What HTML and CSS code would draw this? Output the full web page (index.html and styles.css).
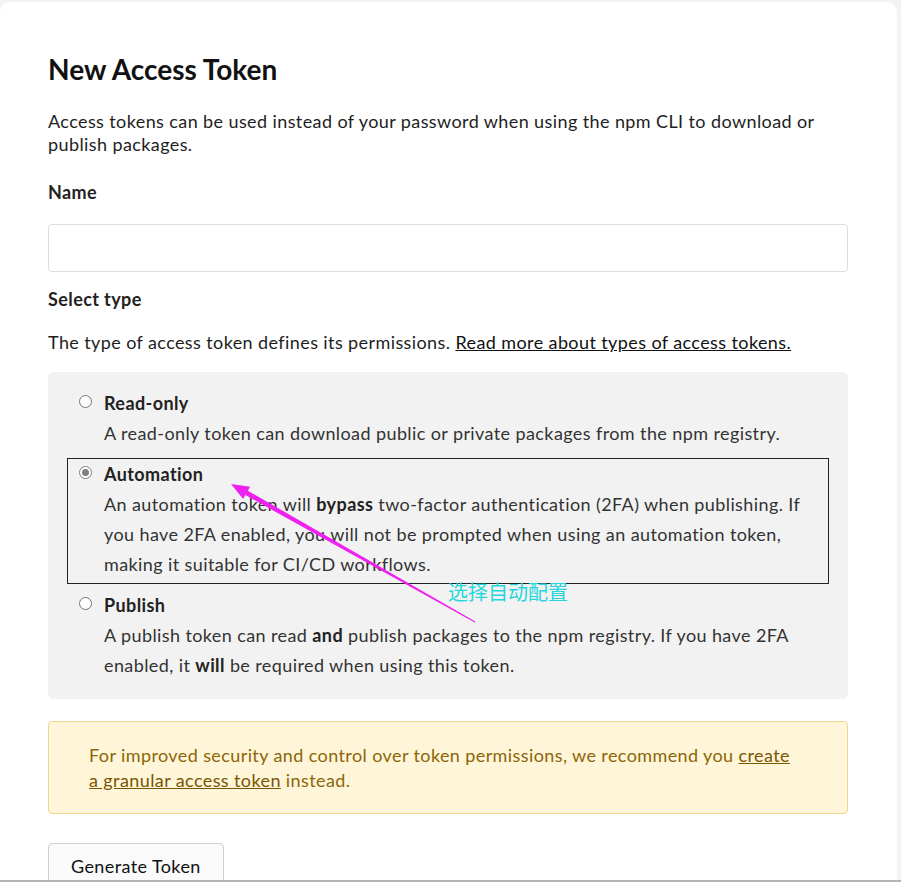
FILE: index.html
```html
<!DOCTYPE html>
<html>
<head>
<meta charset="utf-8">
<link rel="stylesheet" href="styles.css">
</head>
<body>
<div class="frame">
  <main class="card">
    <h1 class="title">New Access Token</h1>
    <p class="intro">Access tokens can be used instead of your password when using the npm CLI to download or publish packages.</p>
    <div class="label name-label">Name</div>
    <div class="input"></div>
    <div class="label type-label">Select type</div>
    <p class="type-intro">The type of access token defines its permissions. <a class="link">Read more about types of access tokens.</a></p>
    <div class="types">
      <div class="option">
        <span class="radio"></span>
        <div class="option-body">
          <div class="option-title">Read-only</div>
          <div class="option-desc">A read-only token can download public or private packages from the npm registry.</div>
        </div>
      </div>
      <div class="option selected">
        <span class="radio checked"></span>
        <div class="option-body">
          <div class="option-title">Automation</div>
          <div class="option-desc">An automation token will <b>bypass</b> two-factor authentication (2FA) when publishing. If you have 2FA enabled, you will not be prompted when using an automation token, making it suitable for CI/CD workflows.</div>
        </div>
      </div>
      <div class="option">
        <span class="radio"></span>
        <div class="option-body">
          <div class="option-title">Publish</div>
          <div class="option-desc">A publish token can read <b>and</b> publish packages to the npm registry. If you have 2FA enabled, it <b>will</b> be required when using this token.</div>
        </div>
      </div>
    </div>
    <div class="notice">For improved security and control over token permissions, we recommend you <a class="notice-link">create a granular access token</a> instead.</div>
    <div class="button">Generate Token</div>

    <div class="note">选择自动配置</div>
    <svg class="arrow" width="901" height="882" viewBox="0 0 901 882">
      <polygon points="231,484 250.1,486.8 247.8,490.7 475.3,621.6 474.7,622.4 245.4,495.1 243.1,499" fill="#ee22ee"/>
    </svg>
  </main>
</div>
</body>
</html>
```

FILE: styles.css
```css
html, body {
  margin: 0;
  padding: 0;
  background: #f3f3f3;
}
.frame {
  width: 901px;
  height: 882px;
  box-sizing: border-box;
  border-bottom: 2px solid #b4b4b4;
  overflow: hidden;
  padding-top: 2px;
  padding-right: 4px;
}
.card {
  position: relative;
  background: #fff;
  border-radius: 10px 10px 0 0;
  height: 100%;
  box-sizing: border-box;
  padding: 0 49px 0 48px;
  font-family: Lato, "Noto Sans CJK SC", sans-serif;
  font-size: 18px;
  letter-spacing: 0.4px;
  color: #1e1e1e;
}
.title {
  margin: 0;
  padding-top: 50px;
  font-size: 28px;
  line-height: 34px;
  font-weight: 700;
  letter-spacing: 0;
  color: #111;
}
.intro {
  margin: 24px 0 0;
  line-height: 23px;
}
.label {
  font-weight: 700;
  line-height: 23px;
  color: #222;
}
.name-label { margin-top: 25px; }
.input {
  margin-top: 20px;
  height: 46px;
  border: 1px solid #dcdcdc;
  border-radius: 4px;
}
.type-label { margin-top: 16px; }
.type-intro {
  margin: 20px 0 0;
  line-height: 23px;
}
.link {
  color: #111;
  text-decoration: underline;
}
.types {
  margin-top: 18px;
  background: #f2f2f2;
  border-radius: 5px;
  padding: 15px 19px 14px;
  display: flex;
  flex-direction: column;
  gap: 5px;
}
.option {
  display: flex;
  gap: 12px;
  padding: 0 11px 4px;
  border: 1px solid transparent;
  line-height: 30px;
  color: #333;
}
.option.selected {
  border-color: #222;
}
.radio {
  flex: none;
  width: 11px;
  height: 11px;
  margin-top: 7px;
  border: 1px solid #767676;
  border-radius: 50%;
  background: #fff;
  position: relative;
}
.radio.checked {
  border-color: #808080;
}
.radio.checked::after {
  content: "";
  position: absolute;
  left: 2px;
  top: 2px;
  width: 7px;
  height: 7px;
  border-radius: 50%;
  background: #808080;
}
.option-title {
  font-weight: 700;
  color: #222;
}
.option-desc b {
  color: #222;
}
.notice {
  margin-top: 22px;
  background: #fff5d8;
  border: 1px solid #efd68e;
  border-radius: 4px;
  padding: 21px 52px 20px 40px;
  line-height: 25px;
  color: #8c6608;
}
.notice-link {
  color: #7a5600;
  text-decoration: underline;
}
.button {
  margin-top: 29px;
  display: inline-block;
  padding: 11px 22px 12px;
  border: 1px solid #cfcfcf;
  border-radius: 4px;
  background: #fafafa;
  line-height: 23px;
  color: #111;
}
.note {
  position: absolute;
  left: 448px;
  top: 577px;
  font-size: 20px;
  line-height: 26px;
  letter-spacing: 0;
  color: #25d7dc;
}
.arrow {
  position: absolute;
  left: 0;
  top: -2px;
  pointer-events: none;
}
```
